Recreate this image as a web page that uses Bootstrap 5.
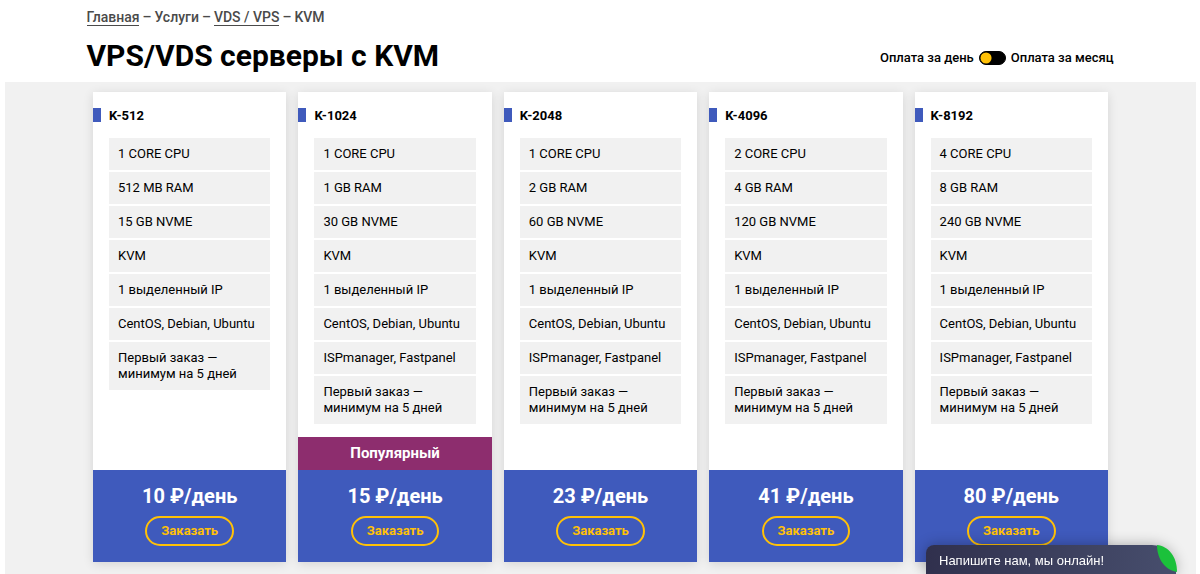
<!DOCTYPE html>
<html lang="ru">
<head>
<meta charset="utf-8">
<meta name="viewport" content="width=device-width, initial-scale=1">
<title>VPS/VDS серверы с KVM</title>
<link href="https://cdn.jsdelivr.net/npm/bootstrap@5.3.0/dist/css/bootstrap.min.css" rel="stylesheet">
<style>
  body { font-family: Roboto, "Liberation Sans", sans-serif; font-size: 13px; line-height: 16px; color: #000; background: #fff; }
  .page-wrap { max-width: 1051px; padding: 0 12px; }
  .crumbs { --bs-breadcrumb-divider: "–"; --bs-breadcrumb-divider-color: #4a4a4a; --bs-breadcrumb-item-padding-x: 3px; font-size: 14px; font-weight: 500; color: #4a4a4a; }
  .crumbs a { color: inherit; text-decoration: none; border-bottom: 1px solid #4a4a4a; }
  .crumbs .breadcrumb-item.active { color: inherit; }
  .crumbs li { padding-top: 9px; white-space: nowrap; }
  .headline { padding: 13px 0 8px; }
  .page-title { font-size: 30px; line-height: 36px; font-weight: 700; }
  .period { gap: 5px; font-weight: 500; }
  .period .form-check-input { width: 27px; height: 14px; background-color: #000; border: 1px solid #000;
    --bs-form-switch-bg: url("data:image/svg+xml,%3csvg xmlns='http://www.w3.org/2000/svg' viewBox='-4 -4 8 8'%3e%3ccircle r='3.7' fill='%23ffc107'/%3e%3c/svg%3e") !important; }
  .plans-area { background: #f1f1f1; margin: 0 4px 0 5px; padding-top: 10px; }
  .plans { display: grid; grid-template-columns: repeat(5, minmax(0, 1fr)); gap: 12px; padding: 0 6px; }
  .plan { --bs-card-border-width: 0; --bs-card-border-radius: 0; box-shadow: 0 2px 10px rgba(0,0,0,.12); min-height: 470px; }
  .plan-name { height: 14px; font-size: 13px; line-height: 16px; font-weight: 700; padding-left: 8px; border-left: 8px solid #3f5abc; margin: 16px 0; }
  .specs { margin: 0 16px; gap: 2px; }
  .specs li { background: #f1f1f1; padding: 8px 9px; }
  .popular { background: #8d2d6e; color: #fff; font-size: 15px; line-height: 17px; font-weight: 700; padding: 8px; }
  .order { background: #3f5abc; color: #fff; height: 92px; padding-top: 14px; }
  .price { font-size: 20px; line-height: 24px; font-weight: 700; margin-bottom: 8px; }
  .btn-order { --bs-btn-color: #ffc107; --bs-btn-border-color: #ffc107; --bs-btn-border-width: 2px; --bs-btn-border-radius: 15px; --bs-btn-font-size: 13px; --bs-btn-font-weight: 700; --bs-btn-line-height: 16px; --bs-btn-padding-y: 5px; --bs-btn-padding-x: 14px; --bs-btn-hover-color: #000; --bs-btn-hover-bg: #ffc107; }
  .chat { right: 24px; width: 250px; height: 29px; border: 0; border-radius: 8px 24px 0 0; padding: 3px 13px 0; background: linear-gradient(95deg, #30304d, #474e6d); color: #fff; font: 13px/20px "Liberation Sans", sans-serif; box-shadow: 0 0 14px rgba(0,0,0,.3); }
  .chat svg { top: 0; right: -1px; }
  @media (max-width: 991px) { .plans { grid-template-columns: repeat(auto-fill, minmax(194px, 1fr)); } }
</style>
</head>
<body class="d-flex flex-column min-vh-100">
<header class="container-fluid page-wrap">
  <nav aria-label="Навигация">
    <ol class="breadcrumb crumbs mb-0">
      <li class="breadcrumb-item"><a href="#">Главная</a></li>
      <li class="breadcrumb-item">Услуги</li>
      <li class="breadcrumb-item"><a href="#">VDS / VPS</a></li>
      <li class="breadcrumb-item active" aria-current="page">KVM</li>
    </ol>
  </nav>
  <div class="headline d-flex flex-wrap justify-content-between align-items-center">
    <h1 class="page-title mb-0">VPS/VDS серверы с KVM</h1>
    <div class="period form-switch d-flex align-items-center p-0 pt-1">
      <label for="period">Оплата за день</label>
      <input class="form-check-input m-0" type="checkbox" role="switch" id="period">
      <label for="period">Оплата за месяц</label>
    </div>
  </div>
</header>
<main class="plans-area flex-grow-1">
  <div class="container-fluid page-wrap">
    <div class="plans">
      <section class="card plan">
        <h2 class="plan-name">K-512</h2>
        <ul class="specs list-unstyled d-flex flex-column">
          <li>1 CORE CPU</li><li>512 MB RAM</li><li>15 GB NVME</li><li>KVM</li><li>1 выделенный IP</li><li>CentOS, Debian, Ubuntu</li><li>Первый заказ —<br>минимум на 5 дней</li>
        </ul>
        <div class="order text-center mt-auto">
          <div class="price">10 ₽/день</div>
          <button type="button" class="btn btn-order">Заказать</button>
        </div>
      </section>
      <section class="card plan">
        <h2 class="plan-name">K-1024</h2>
        <ul class="specs list-unstyled d-flex flex-column">
          <li>1 CORE CPU</li><li>1 GB RAM</li><li>30 GB NVME</li><li>KVM</li><li>1 выделенный IP</li><li>CentOS, Debian, Ubuntu</li><li>ISPmanager, Fastpanel</li><li>Первый заказ —<br>минимум на 5 дней</li>
        </ul>
        <div class="popular text-center mt-auto">Популярный</div>
        <div class="order text-center">
          <div class="price">15 ₽/день</div>
          <button type="button" class="btn btn-order">Заказать</button>
        </div>
      </section>
      <section class="card plan">
        <h2 class="plan-name">K-2048</h2>
        <ul class="specs list-unstyled d-flex flex-column">
          <li>1 CORE CPU</li><li>2 GB RAM</li><li>60 GB NVME</li><li>KVM</li><li>1 выделенный IP</li><li>CentOS, Debian, Ubuntu</li><li>ISPmanager, Fastpanel</li><li>Первый заказ —<br>минимум на 5 дней</li>
        </ul>
        <div class="order text-center mt-auto">
          <div class="price">23 ₽/день</div>
          <button type="button" class="btn btn-order">Заказать</button>
        </div>
      </section>
      <section class="card plan">
        <h2 class="plan-name">K-4096</h2>
        <ul class="specs list-unstyled d-flex flex-column">
          <li>2 CORE CPU</li><li>4 GB RAM</li><li>120 GB NVME</li><li>KVM</li><li>1 выделенный IP</li><li>CentOS, Debian, Ubuntu</li><li>ISPmanager, Fastpanel</li><li>Первый заказ —<br>минимум на 5 дней</li>
        </ul>
        <div class="order text-center mt-auto">
          <div class="price">41 ₽/день</div>
          <button type="button" class="btn btn-order">Заказать</button>
        </div>
      </section>
      <section class="card plan">
        <h2 class="plan-name">K-8192</h2>
        <ul class="specs list-unstyled d-flex flex-column">
          <li>4 CORE CPU</li><li>8 GB RAM</li><li>240 GB NVME</li><li>KVM</li><li>1 выделенный IP</li><li>CentOS, Debian, Ubuntu</li><li>ISPmanager, Fastpanel</li><li>Первый заказ —<br>минимум на 5 дней</li>
        </ul>
        <div class="order text-center mt-auto">
          <div class="price">80 ₽/день</div>
          <button type="button" class="btn btn-order">Заказать</button>
        </div>
      </section>
    </div>
  </div>
</main>
<button type="button" class="chat position-fixed bottom-0 text-start">Напишите нам, мы онлайн!
  <svg class="position-absolute" width="20" height="28" viewBox="0 0 20 28" aria-hidden="true"><path d="M0 0C11 1 20 11 20 27C8 25 0 14 0 0Z" fill="#1bc13b"/></svg>
</button>
<script src="https://cdn.jsdelivr.net/npm/bootstrap@5.3.0/dist/js/bootstrap.bundle.min.js"></script>
</body>
</html>
